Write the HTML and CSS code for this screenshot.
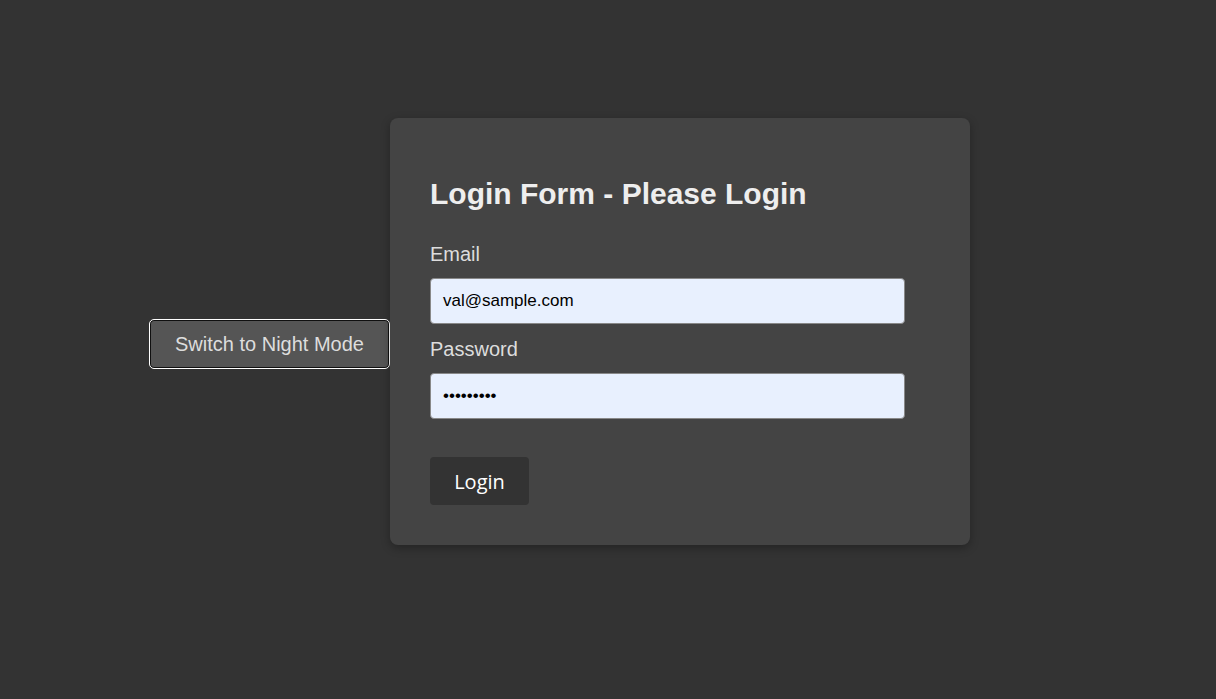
FILE: index.html
```html
<!DOCTYPE html>
<html>
<head>
<meta charset="utf-8">
<link rel="stylesheet" href="styles.css">
</head>
<body>
<div class="page">
  <button class="mode-btn">Switch to Night Mode</button>
  <div class="card">
    <h2 class="title">Login Form - Please Login</h2>
    <label class="label">Email</label>
    <div class="input">val@sample.com</div>
    <label class="label">Password</label>
    <div class="input pw">&#8226;&#8226;&#8226;&#8226;&#8226;&#8226;&#8226;&#8226;&#8226;</div>
    <button class="login-btn">Login</button>
  </div>
</div>
</body>
</html>
```

FILE: styles.css
```css
html, body {
  margin: 0;
  padding: 0;
  background: #333333;
  height: 100%;
}
body {
  font-family: "Liberation Sans", Arial, sans-serif;
}
.page {
  display: flex;
  align-items: flex-start;
  padding: 118px 0 0 149px;
}
.mode-btn {
  margin-top: 201px;
  width: 241px;
  height: 50px;
  background: #555555;
  color: #dddddd;
  border: 1px solid #ffffff;
  box-shadow: inset 0 0 0 1px #101010;
  border-radius: 5px;
  font-family: "Liberation Sans", Arial, sans-serif;
  font-size: 20px;
  padding: 0;
}
.card {
  width: 500px;
  padding: 40px;
  background: #444444;
  border-radius: 8px;
  box-shadow: 0 3px 10px rgba(0,0,0,0.3);
}
.title {
  margin: 18px 0 32px;
  font-size: 30px;
  font-weight: bold;
  color: #eeeeee;
  line-height: 35px;
}
.label {
  display: block;
  font-size: 20px;
  color: #dddddd;
  line-height: 23px;
  margin-bottom: 12px;
}
.input {
  box-sizing: border-box;
  width: 95%;
  height: 46px;
  background: #e8f0fe;
  border: 1px solid #888888;
  border-radius: 4px;
  padding: 0 12px;
  font-size: 17px;
  color: #000;
  display: flex;
  align-items: center;
  margin-bottom: 14px;
}
.pw {
  margin-bottom: 38px;
}
.login-btn {
  display: block;
  width: 99px;
  height: 48px;
  background: #333333;
  color: #ffffff;
  border: none;
  border-radius: 4px;
  font-family: "Open Sans", "Noto Sans", sans-serif;
  font-size: 20px;
  padding: 0;
}
```
